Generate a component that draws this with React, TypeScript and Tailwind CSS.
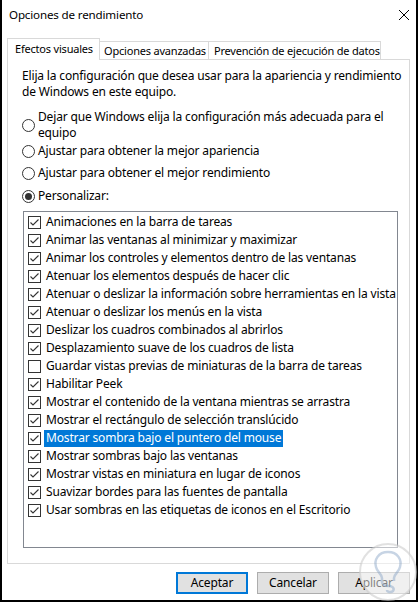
import React from "react";

const items: { label: string; checked: boolean; selected?: boolean }[] = [
  { label: "Animaciones en la barra de tareas", checked: true },
  { label: "Animar las ventanas al minimizar y maximizar", checked: true },
  { label: "Animar los controles y elementos dentro de las ventanas", checked: true },
  { label: "Atenuar los elementos después de hacer clic", checked: true },
  { label: "Atenuar o deslizar la información sobre herramientas en la vista", checked: true },
  { label: "Atenuar o deslizar los menús en la vista", checked: true },
  { label: "Deslizar los cuadros combinados al abrirlos", checked: true },
  { label: "Desplazamiento suave de los cuadros de lista", checked: true },
  { label: "Guardar vistas previas de miniaturas de la barra de tareas", checked: false },
  { label: "Habilitar Peek", checked: true },
  { label: "Mostrar el contenido de la ventana mientras se arrastra", checked: true },
  { label: "Mostrar el rectángulo de selección translúcido", checked: true },
  { label: "Mostrar sombra bajo el puntero del mouse", checked: true, selected: true },
  { label: "Mostrar sombras bajo las ventanas", checked: true },
  { label: "Mostrar vistas en miniatura en lugar de iconos", checked: true },
  { label: "Suavizar bordes para las fuentes de pantalla", checked: true },
  { label: "Usar sombras en las etiquetas de iconos en el Escritorio", checked: true },
];

function Radio({ checked }: { checked?: boolean }) {
  return (
    <span className="w-[13px] h-[13px] rounded-full border border-[#333333] bg-white flex items-center justify-center shrink-0">
      {checked && <span className="w-[7px] h-[7px] rounded-full bg-[#333333]" />}
    </span>
  );
}

function Check({ checked }: { checked: boolean }) {
  return (
    <span className="w-[13px] h-[13px] border border-[#333333] bg-white flex items-center justify-center shrink-0">
      {checked && (
        <svg width="11" height="11" viewBox="0 0 11 11">
          <path d="M1.5 5.5 L4 8 L9.5 2.5" fill="none" stroke="#333333" strokeWidth="1.1" />
        </svg>
      )}
    </span>
  );
}

export default function App() {
  return (
    <div
      className="w-[419px] h-[602px] bg-white text-[12px] text-black relative overflow-hidden tracking-[-0.16px]"
      style={{ fontFamily: '"Noto Sans", "Open Sans", sans-serif' }}
    >
      <div className="w-[418px] h-[602px] border-l-2 border-r-2 border-b-2 border-black flex flex-col">
        {/* title bar */}
        <div className="h-[30px] flex items-center justify-between pl-[7px] pr-[6px]">
          <span className="text-[11.6px] whitespace-nowrap">Opciones de rendimiento</span>
          <svg width="12" height="12" viewBox="0 0 12 12">
            <path d="M1 1 L11 11 M11 1 L1 11" stroke="#000" strokeWidth="1" />
          </svg>
        </div>
        {/* tabs */}
        <div className="flex items-end pl-[5px] mt-[8px] h-[21px] relative z-10 whitespace-nowrap text-[11px] tracking-[-0.2px]">
          <div className="w-[93px] h-[22px] mb-[-1px] border border-b-0 border-[#d9d9d9] bg-white pl-[7px] flex items-center">
            Efectos visuales
          </div>
          <div className="w-[109px] h-[18px] border border-l-0 border-b-0 border-[#d9d9d9] bg-white pl-[4px] flex items-center pt-[1px]">
            Opciones avanzadas
          </div>
          <div className="w-[172px] h-[18px] border border-l-0 border-b-0 border-[#d9d9d9] bg-white pl-[5px] flex items-center pt-[1px]">
            Prevención de ejecución de datos
          </div>
        </div>
        {/* panel */}
        <div className="ml-[5px] w-[403px] h-[505px] border border-[#d9d9d9] pt-[8px] pl-[14px] flex flex-col">
          <p className="leading-[16px] pr-[4px]">
            Elija la configuración que desea usar para la apariencia y rendimiento de Windows en este equipo.
          </p>
          <div className="mt-[9px] flex items-center gap-[3px]">
            <Radio />
            <span className="leading-[16px] whitespace-nowrap">
              Dejar que Windows elija la configuración más adecuada para el
              <br />
              equipo
            </span>
          </div>
          <div className="mt-[2px] flex items-center gap-[3px] leading-[16px]">
            <Radio />
            <span>Ajustar para obtener la mejor apariencia</span>
          </div>
          <div className="mt-[6px] flex items-center gap-[3px] leading-[16px]">
            <Radio />
            <span>Ajustar para obtener el mejor rendimiento</span>
          </div>
          <div className="mt-[7px] flex items-center gap-[3px] leading-[16px]">
            <Radio checked />
            <span>Personalizar:</span>
          </div>
          <div className="mt-[7px] ml-[1px] w-[375px] h-[337px] border border-[#828790] pt-[1px] flex flex-col">
            {items.map((it) => (
              <div key={it.label} className="h-[18px] flex items-center pl-[4px]">
                <Check checked={it.checked} />
                <span
                  className={
                    "ml-[3px] px-[2px] h-[17px] flex items-center whitespace-nowrap " +
                    (it.selected ? "bg-[#0078d7] text-white" : "")
                  }
                >
                  {it.label}
                </span>
              </div>
            ))}
          </div>
        </div>
        {/* buttons */}
        <div className="mt-[8px] flex justify-end gap-[9px] pr-[6px]">
          <button className="w-[72px] h-[22px] bg-[#e1e1e1] border-2 border-[#0078d7] flex items-center justify-center">
            Aceptar
          </button>
          <button className="w-[72px] h-[22px] bg-[#e1e1e1] border border-[#adadad] flex items-center justify-center">
            Cancelar
          </button>
          <button className="w-[72px] h-[22px] bg-[#e1e1e1] border border-[#adadad] flex items-center justify-center">
            Aplicar
          </button>
        </div>
      </div>
      {/* watermark */}
      <svg className="absolute left-[358px] top-[542px]" width="62" height="62" viewBox="0 0 62 62">
        <circle cx="30" cy="30" r="28" fill="rgba(255,255,255,0.5)" stroke="rgba(205,205,205,0.6)" strokeWidth="2" />
        <path
          d="M30 10 C20 10 16 18 18 25 C19 30 24 32 24 36 L24 40 C24 43 28 44 31 44 C34 44 37 46 35 49 C33 51 29 50 29 48"
          fill="none"
          stroke="rgba(130,160,195,0.45)"
          strokeWidth="2.5"
        />
        <path
          d="M30 10 C40 10 44 18 42 25 C41 30 36 32 36 36 L36 39"
          fill="none"
          stroke="rgba(130,160,195,0.45)"
          strokeWidth="2.5"
        />
      </svg>
    </div>
  );
}
